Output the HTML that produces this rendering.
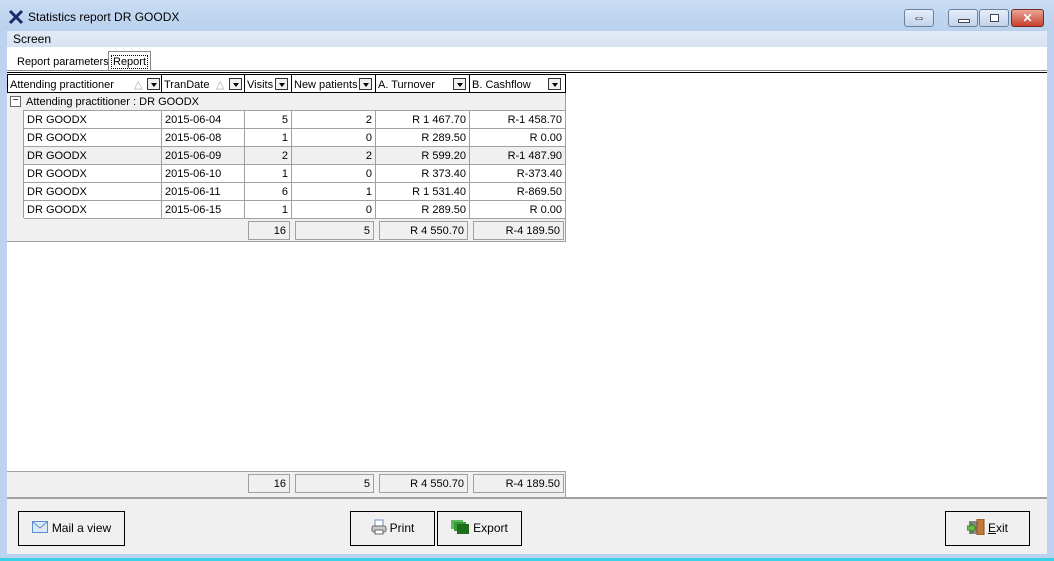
<!DOCTYPE html><html><head><style>
*{margin:0;padding:0;box-sizing:border-box}
body{width:1054px;height:561px;overflow:hidden;background:#bcd2ee;font-family:"Liberation Sans",sans-serif;font-size:11px;color:#000;position:relative}
.a{position:absolute}
.tb{left:0;top:0;width:1054px;height:31px;background:linear-gradient(#c9dcf3,#b9d1ee)}
.wb{border:1px solid #6c819e;border-radius:3px;height:18px;top:9px;background:linear-gradient(#e6eefa,#c2d3ea)}
.cell{position:absolute;border-right:1px solid #a0a0a0;border-bottom:1px solid #a0a0a0;height:18px;line-height:17px;padding:1px 3px 0;white-space:nowrap;overflow:hidden}
.r{text-align:right}
.h{border:1px solid #000;border-left:none;background:#fff;height:19px;line-height:17px;padding:2px 2px 0}
.dd{position:absolute;top:3px;width:13px;height:12px;border:1px solid #333;background:#f0f0f0}
.dd:after{content:"";position:absolute;left:3px;top:4px;border-left:3px solid transparent;border-right:3px solid transparent;border-top:4px solid #000}
.ft{position:absolute;border:1px solid #a0a0a0;height:19px;line-height:17px;padding-top:1px;text-align:right;padding-right:3px;background:#f0f0f0}
.btn{position:absolute;border:1px solid #000;background:#f0f0f0;top:511px;height:35px;line-height:33px;font-size:12px;text-align:center}
</style></head><body>
<div class="a tb"></div>
<svg class="a" style="left:8px;top:9px" width="16" height="16"><path d="M2 2L14 14M14 2L2 14" stroke="#1a2a6a" stroke-width="3"/></svg>
<div class="a" style="left:28px;top:10px;font-size:12px">Statistics report DR GOODX</div>
<div class="a wb" style="left:904px;width:30px;text-align:center;line-height:15px;color:#445;font-size:14px">⇔</div>
<div class="a wb" style="left:948px;width:30px"><div class="a" style="left:9px;top:9px;width:12px;height:4px;border:1px solid #445;background:#fff"></div></div>
<div class="a wb" style="left:979px;width:30px"><div class="a" style="left:10px;top:4px;width:9px;height:8px;border:1px solid #445;background:#fff"></div></div>
<div class="a wb" style="left:1011px;width:33px;background:linear-gradient(#e9a597,#c8402c);border-color:#7a2a20;color:#fff;text-align:center;font-weight:bold;line-height:16px;font-size:12px">✕</div>
<div class="a" style="left:7px;top:31px;width:1040px;height:16px;background:linear-gradient(#e4ebf6,#d6e1f1);font-size:12px;padding-left:6px;line-height:16px">Screen</div>
<div class="a" style="left:7px;top:47px;width:1040px;height:451px;background:#fff"></div>
<div class="a" style="left:17px;top:56px">Report parameters</div>
<div class="a" style="left:108px;top:51px;width:43px;height:20px;border:1px solid #888;border-bottom:none;background:#fff;padding:4px 0 0 2px"><span style="border:1px dotted #000;padding:0 1px">Report</span></div>
<div class="a" style="left:7px;top:70px;width:1040px;height:1px;background:#888"></div>
<div class="a" style="left:7px;top:72px;width:1040px;height:1px;background:#000"></div>
<div class="cell h" style="left:7px;top:74px;width:155px;border-left:1px solid #000">Attending practitioner<span class="a" style="left:126px;color:#aaa">△</span><span class="dd" style="left:139px"></span></div>
<div class="cell h" style="left:162px;top:74px;width:83px">TranDate<span class="a" style="left:54px;color:#aaa">△</span><span class="dd" style="left:67px"></span></div>
<div class="cell h" style="left:245px;top:74px;width:47px">Visits<span class="dd" style="left:30px"></span></div>
<div class="cell h" style="left:292px;top:74px;width:84px">New patients<span class="dd" style="left:67px"></span></div>
<div class="cell h" style="left:376px;top:74px;width:94px">A. Turnover<span class="dd" style="left:77px"></span></div>
<div class="cell h" style="left:470px;top:74px;width:96px">B. Cashflow<span class="dd" style="left:78px"></span></div>
<div class="a" style="left:7px;top:93px;width:559px;height:149px;background:#f0f0f0;border-right:1px solid #a0a0a0;border-bottom:1px solid #a0a0a0"></div>
<div class="a" style="left:10px;top:96px;width:11px;height:11px;border:1px solid #666;background:#fff;font-size:10px;line-height:8px;text-align:center">−</div>
<div class="a" style="left:26px;top:96px">Attending practitioner : DR GOODX</div>
<div class="a" style="left:23px;top:110px;width:543px;height:108px;border-top:1px solid #a0a0a0;border-left:1px solid #a0a0a0"></div>
<div class="a" style="left:7px;top:471px;width:559px;height:26px;background:#f0f0f0;border-top:1px solid #a0a0a0;border-right:1px solid #a0a0a0"></div>
<div id="rows"></div>
<script>
var d=[["2015-06-04",5,2,"R 1 467.70","R-1 458.70"],["2015-06-08",1,0,"R 289.50","R 0.00"],["2015-06-09",2,2,"R 599.20","R-1 487.90"],["2015-06-10",1,0,"R 373.40","R-373.40"],["2015-06-11",6,1,"R 1 531.40","R-869.50"],["2015-06-15",1,0,"R 289.50","R 0.00"]];
var h="";d.forEach(function(r,i){var y=111+i*18,bg=i==2?"#f0f0f0":"#fff";
var c=[[24,138,"DR GOODX",""],[162,83,r[0],""],[245,47,r[1],"r"],[292,84,r[2],"r"],[376,94,r[3],"r"],[470,96,r[4],"r"]];
c.forEach(function(k){h+='<div class="cell '+k[3]+'" style="left:'+k[0]+'px;top:'+y+'px;width:'+k[1]+'px;background:'+bg+'">'+k[2]+'</div>'});});
[221,474].forEach(function(y){
[[248,42,"16"],[295,79,"5"],[379,89,"R 4 550.70"],[473,91,"R-4 189.50"]].forEach(function(k){h+='<div class="ft" style="left:'+k[0]+'px;top:'+y+'px;width:'+k[1]+'px">'+k[2]+'</div>'});});
document.getElementById("rows").innerHTML=h;
</script>
<div class="a" style="left:7px;top:497px;width:1040px;height:2px;background:#a0a0a0"></div>
<div class="a" style="left:7px;top:499px;width:1040px;height:55px;background:#f0f0f0"></div>
<div class="a" style="left:0;top:558px;width:1054px;height:3px;background:#3ad0e6"></div>
<div class="btn" style="left:18px;width:107px"><svg width="16" height="12" style="vertical-align:-1px;margin-right:4px"><rect x="0.5" y="0.5" width="15" height="11" fill="#dde9fb" stroke="#5b8bd0"/><path d="M1 1L8 7L15 1" stroke="#5b8bd0" fill="none"/></svg>Mail a view</div>
<div class="btn" style="left:350px;width:85px"><svg width="16" height="16" style="vertical-align:-3px;margin-right:3px"><rect x="4" y="1" width="8" height="6" fill="#fff" stroke="#6b8fbf"/><rect x="1" y="7" width="14" height="6" rx="2" fill="#c8ccd4" stroke="#666"/><rect x="4" y="11" width="8" height="4" fill="#fff" stroke="#666"/></svg>Print</div>
<div class="btn" style="left:437px;width:85px"><svg width="18" height="14" style="vertical-align:-2px;margin-right:4px"><rect x="0" y="0" width="12" height="9" fill="#5cb85c"/><rect x="3" y="2" width="12" height="9" fill="#3a9a3a"/><rect x="6" y="4" width="12" height="10" fill="#1e6e1e"/></svg>Export</div>
<div class="btn" style="left:945px;width:85px"><svg width="18" height="16" style="vertical-align:-3px;margin-right:3px"><rect x="2" y="2" width="8" height="13" fill="#888"/><rect x="10" y="0" width="7" height="16" fill="#c07a3a" stroke="#8a5020"/><path d="M0 7h4v-3l5 5-5 5v-3H0z" fill="#6cc04a" stroke="#3a7a2a"/></svg><u>E</u>xit</div>
</body></html>
